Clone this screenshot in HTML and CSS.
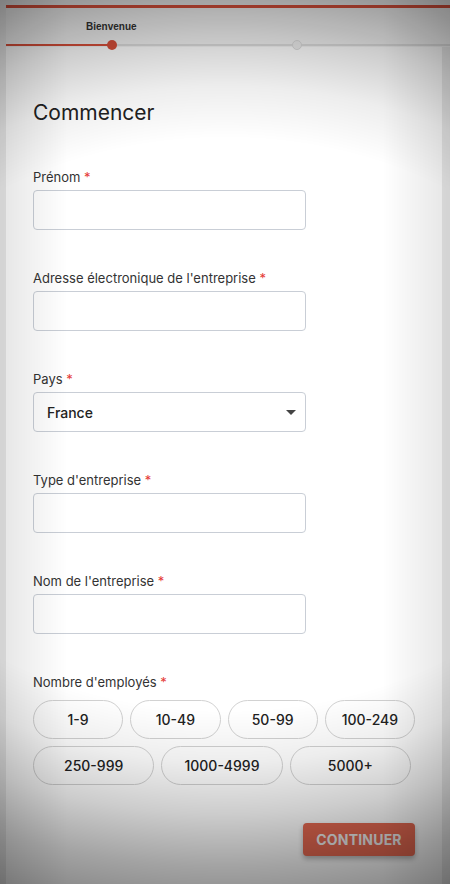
FILE: index.html
```html
<!DOCTYPE html>
<html lang="fr">
<head>
<meta charset="utf-8">
<title>Commencer</title>
<link rel="stylesheet" href="styles.css">
</head>
<body>
<div class="page">
  <header class="steps">
    <div class="step-labels">
      <span class="step-label">Bienvenue</span>
    </div>
    <div class="track">
      <div class="track-fill"></div>
      <span class="dot dot-active"></span>
      <span class="dot dot-next"></span>
    </div>
  </header>
  <main class="card">
    <h1 class="title">Commencer</h1>
    <form class="form">
      <div class="field">
        <label class="label">Prénom <span class="req">*</span></label>
        <div class="input"></div>
      </div>
      <div class="field">
        <label class="label">Adresse électronique de l'entreprise <span class="req">*</span></label>
        <div class="input"></div>
      </div>
      <div class="field">
        <label class="label">Pays <span class="req">*</span></label>
        <div class="input select">
          <span class="select-value">France</span>
          <svg class="caret" width="10" height="5" viewBox="0 0 10 5"><path d="M0 0 L10 0 L5 5 Z" fill="#444"/></svg>
        </div>
      </div>
      <div class="field">
        <label class="label">Type d'entreprise <span class="req">*</span></label>
        <div class="input"></div>
      </div>
      <div class="field">
        <label class="label">Nom de l'entreprise <span class="req">*</span></label>
        <div class="input"></div>
      </div>
      <div class="field field-chips">
        <label class="label">Nombre d'employés <span class="req">*</span></label>
        <div class="chips">
          <div class="chip-row row-4">
            <span class="chip">1-9</span>
            <span class="chip">10-49</span>
            <span class="chip">50-99</span>
            <span class="chip">100-249</span>
          </div>
          <div class="chip-row row-3">
            <span class="chip">250-999</span>
            <span class="chip">1000-4999</span>
            <span class="chip">5000+</span>
          </div>
        </div>
      </div>
      <div class="actions">
        <button type="button" class="btn">CONTINUER</button>
      </div>
    </form>
  </main>
</div>
<div class="vignette"></div>
</body>
</html>
```
FILE: styles.css
```css
* { box-sizing: border-box; }
html, body { margin: 0; padding: 0; }
body {
  background: #ececec;
  font-family: Inter, "Noto Sans", sans-serif;
  color: #2b2b2b;
  height: 884px;
  overflow: hidden;
}
.page {
  padding: 5px 0 0 6px;
}
.steps {
  border-top: 3px solid #d9503b;
  background: #f4f4f4;
  height: 42px;
  display: flex;
  flex-direction: column;
  justify-content: space-between;
}
.step-labels {
  padding-top: 6px;
  padding-left: 80px;
}
.step-label {
  font-family: "Liberation Sans", Arial, sans-serif;
  font-weight: bold;
  font-size: 10px;
  line-height: 12px;
  color: #333;
}
.track {
  position: relative;
  height: 2px;
  background: #dedede;
  margin-bottom: 1px;
}
.track-fill {
  width: 106px;
  height: 2px;
  background: #d9503b;
}
.dot {
  position: absolute;
  top: -4px;
  width: 10px;
  height: 10px;
  border-radius: 50%;
}
.dot-active {
  left: 101px;
  background: #d9503b;
}
.dot-next {
  left: 286px;
  background: #efefef;
  border: 1px solid #dcdcdc;
}
.card {
  width: 436px;
  background: #fff;
  padding: 52px 27px 40px 27px;
  min-height: 840px;
}
.title {
  margin: 0;
  font-size: 21px;
  line-height: 28px;
  font-weight: 400;
  color: #222;
}
.form {
  margin-top: 42px;
  display: flex;
  flex-direction: column;
  gap: 40px;
}
.field {
  display: flex;
  flex-direction: column;
  gap: 5px;
}
.label {
  font-size: 13px;
  line-height: 16px;
  color: #333;
}
.req {
  color: #e53935;
}
.input {
  width: 273px;
  height: 40px;
  border: 1px solid #c9ced6;
  border-radius: 4px;
  background: #fff;
}
.select {
  display: flex;
  align-items: center;
  justify-content: space-between;
  padding: 0 9px 0 13px;
}
.select-value {
  font-size: 14px;
  font-weight: 500;
  color: #222;
}
.caret { display: block; }
.field-chips { gap: 10px; }
.chips {
  display: flex;
  flex-direction: column;
  gap: 7px;
}
.chip-row {
  display: flex;
  gap: 7px;
}
.row-4 { width: 382px; }
.row-3 { width: 378px; }
.chip {
  flex: 1;
  height: 39px;
  border: 1px solid #d2d2d2;
  border-radius: 20px;
  display: flex;
  align-items: center;
  justify-content: center;
  font-size: 14px;
  font-weight: 500;
  color: #222;
  background: #fff;
}
.actions {
  display: flex;
  justify-content: flex-end;
  margin-top: -2px;
}
.btn {
  width: 112px;
  height: 33px;
  border: none;
  border-radius: 4px;
  background: #e0583f;
  color: #eeeeee;
  font-family: Inter, "Noto Sans", sans-serif;
  font-weight: 700;
  font-size: 14px;
  letter-spacing: 0.2px;
  box-shadow: 0 3px 5px rgba(0,0,0,0.3);
  opacity: 0.9;
}
.vignette {
  position: fixed;
  inset: 0;
  pointer-events: none;
  background:
    radial-gradient(ellipse 700px 520px at 50% 48%, rgba(0,0,0,0) 0%, rgba(0,0,0,0) 55%, rgba(0,0,0,0.07) 65%, rgba(0,0,0,0.2) 75%, rgba(0,0,0,0.36) 85%, rgba(0,0,0,0.56) 100%),
    linear-gradient(to right, rgba(0,0,0,0.1) 0%, rgba(0,0,0,0) 15%, rgba(0,0,0,0) 85%, rgba(0,0,0,0.1) 100%);
}
```
